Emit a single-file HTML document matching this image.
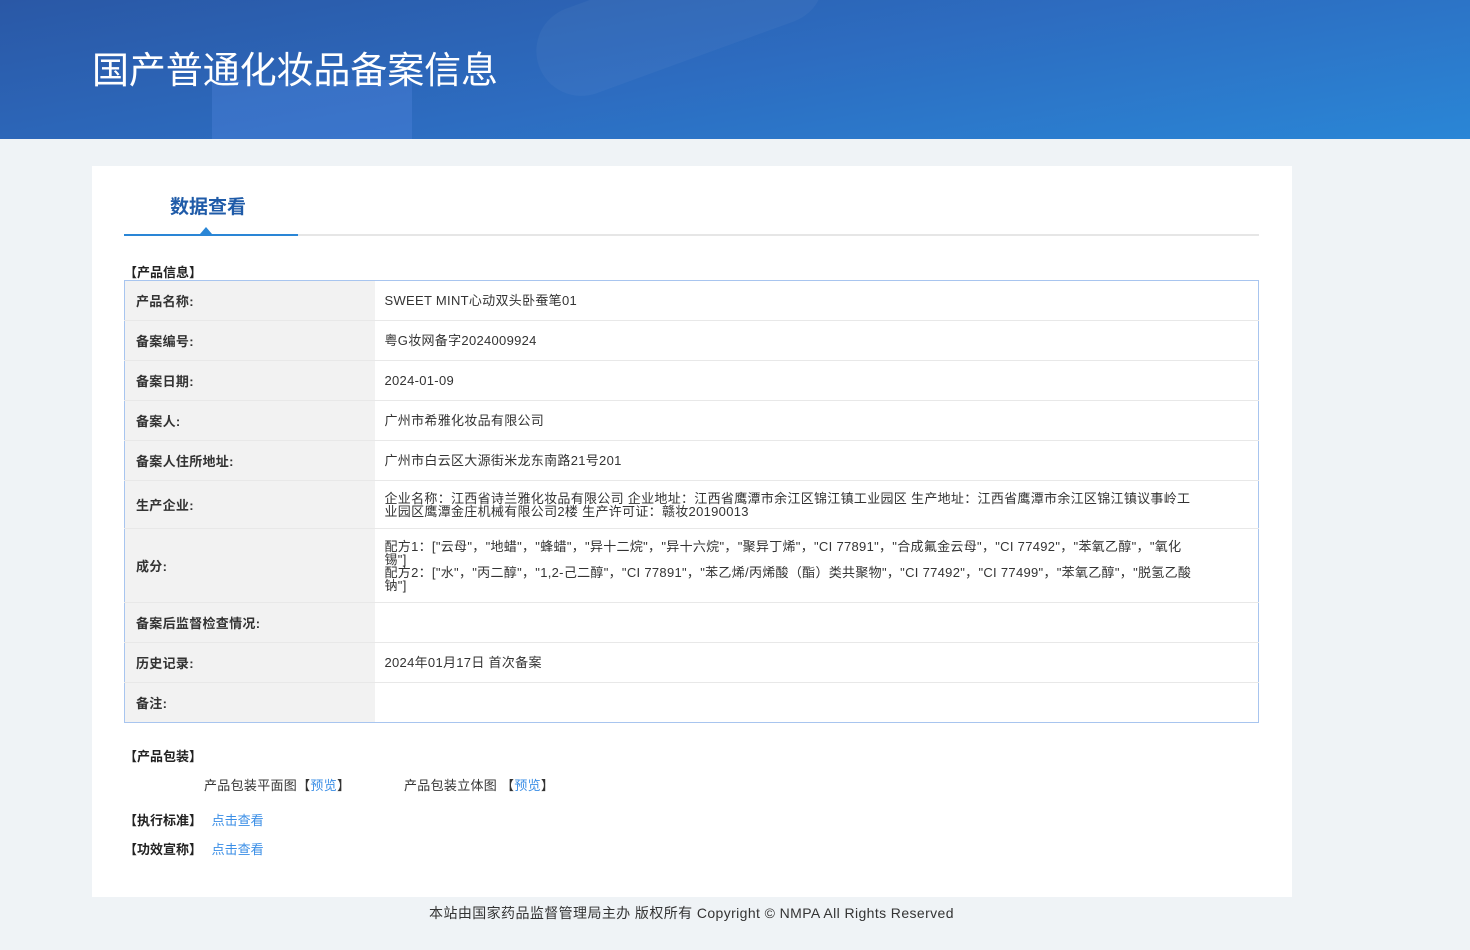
<!DOCTYPE html>
<html><head><meta charset="utf-8"><style>
*{margin:0;padding:0;box-sizing:border-box}
body{width:1470px;height:950px;background:#eff3f6;font-family:"Liberation Sans","Noto Sans CJK SC",sans-serif;color:#333;font-size:13px;position:relative;overflow:hidden}
.hd{position:absolute;left:0;top:0;width:1470px;height:139px;background:linear-gradient(170deg,#2a58a6 0%,#2d6cc0 50%,#2a86d6 100%);overflow:hidden}
.hd .b1{position:absolute;left:212px;top:80px;width:200px;height:60px;background:rgba(90,140,230,.3)}
.hd .b2{position:absolute;left:530px;top:-30px;width:300px;height:90px;border-radius:45px;background:rgba(255,255,255,.04);transform:rotate(-20deg)}
.hd h1{position:absolute;left:92px;top:40px;font-size:37px;font-weight:normal;color:#fff;letter-spacing:-0.1px}
.card{position:absolute;left:92px;top:166px;width:1200px;height:731px;background:#fff}
.tab{position:absolute;left:78px;top:26px;font-size:19px;font-weight:bold;color:#1f5ba8}
.line{position:absolute;left:32px;top:68px;width:1135px;height:2px;background:#e6e6e6}
.line i{position:absolute;left:0;top:0;width:174px;height:2px;background:#2a86d6}
.tri{position:absolute;left:108px;top:61px;width:0;height:0;border-left:6px solid transparent;border-right:6px solid transparent;border-bottom:7px solid #2a86d6}
.sec{position:absolute;left:32px;font-weight:bold;color:#222;font-size:13px}
table{position:absolute;left:32px;top:114px;width:1135px;border-collapse:collapse;border:1px solid #a8c5ef;letter-spacing:0.3px}
td{border-bottom:1px solid #e8e8e8;height:40px;vertical-align:middle}
td.l{width:250px;background:#f2f2f2;font-weight:bold;padding-left:11px;color:#333}
td.v{padding:0 56px 0 10px;line-height:13px;color:#333}
.lk{color:#3a8ee6}
.foot{position:absolute;top:903px;left:0;width:1383px;text-align:center;font-size:14px;color:#333;letter-spacing:0.4px}
</style></head><body>
<div class="hd"><div class="b1"></div><div class="b2"></div><h1>国产普通化妆品备案信息</h1></div>
<div class="card">
<div class="tab">数据查看</div>
<div class="line"><i></i></div><div class="tri"></div>
<div class="sec" style="top:96px">【产品信息】</div>
<table>
<tr><td class="l">产品名称:</td><td class="v">SWEET MINT心动双头卧蚕笔01</td></tr>
<tr><td class="l">备案编号:</td><td class="v">粤G妆网备字2024009924</td></tr>
<tr><td class="l">备案日期:</td><td class="v">2024-01-09</td></tr>
<tr><td class="l">备案人:</td><td class="v">广州市希雅化妆品有限公司</td></tr>
<tr><td class="l">备案人住所地址:</td><td class="v">广州市白云区大源街米龙东南路21号201</td></tr>
<tr><td class="l" style="height:48px">生产企业:</td><td class="v">企业名称：江西省诗兰雅化妆品有限公司 企业地址：江西省鹰潭市余江区锦江镇工业园区 生产地址：江西省鹰潭市余江区锦江镇议事岭工业园区鹰潭金庄机械有限公司2楼 生产许可证：赣妆20190013</td></tr>
<tr><td class="l" style="height:74px">成分:</td><td class="v">配方1：["云母"，"地蜡"，"蜂蜡"，"异十二烷"，"异十六烷"，"聚异丁烯"，"CI 77891"，"合成氟金云母"，"CI 77492"，"苯氧乙醇"，"氧化锡"]<br>配方2：["水"，"丙二醇"，"1,2-己二醇"，"CI 77891"，"苯乙烯/丙烯酸（酯）类共聚物"，"CI 77492"，"CI 77499"，"苯氧乙醇"，"脱氢乙酸钠"]</td></tr>
<tr><td class="l">备案后监督检查情况:</td><td class="v"></td></tr>
<tr><td class="l">历史记录:</td><td class="v">2024年01月17日 首次备案</td></tr>
<tr><td class="l" style="border-bottom:none">备注:</td><td class="v" style="border-bottom:none"></td></tr>
</table>
<div class="sec" style="top:580px">【产品包装】</div>
<div style="position:absolute;left:112px;top:609px;letter-spacing:0.3px">产品包装平面图【<span class="lk">预览</span>】</div>
<div style="position:absolute;left:312px;top:609px;letter-spacing:0.3px">产品包装立体图 【<span class="lk">预览</span>】</div>
<div class="sec" style="top:644px">【执行标准】 <span class="lk" style="font-weight:normal;margin-left:6px">点击查看</span></div>
<div class="sec" style="top:673px">【功效宣称】 <span class="lk" style="font-weight:normal;margin-left:6px">点击查看</span></div>
</div>
<div class="foot">本站由国家药品监督管理局主办 版权所有 Copyright © NMPA All Rights Reserved</div>
</body></html>
